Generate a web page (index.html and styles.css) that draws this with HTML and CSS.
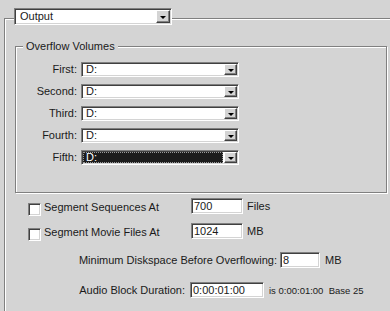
FILE: index.html
```html
<!DOCTYPE html>
<html lang="en">
<head>
  <meta charset="UTF-8">
  <title>Output Settings</title>
  <link rel="stylesheet" href="styles.css">
</head>
<body>
  <div class="panel">
    <div class="panel-head">
      <div class="combo combo-lg">
        <span class="combo-value">Output</span>
        <span class="combo-btn"><span class="arrow"></span></span>
      </div>
    </div>

    <div class="group">
      <div class="group-title">Overflow Volumes</div>
      <div class="volumes">
        <div class="vol-row">
          <span class="vol-label">First:</span>
          <div class="combo"><span class="combo-value">D:</span><span class="combo-btn"><span class="arrow"></span></span></div>
        </div>
        <div class="vol-row">
          <span class="vol-label">Second:</span>
          <div class="combo"><span class="combo-value">D:</span><span class="combo-btn"><span class="arrow"></span></span></div>
        </div>
        <div class="vol-row">
          <span class="vol-label">Third:</span>
          <div class="combo"><span class="combo-value">D:</span><span class="combo-btn"><span class="arrow"></span></span></div>
        </div>
        <div class="vol-row">
          <span class="vol-label">Fourth:</span>
          <div class="combo"><span class="combo-value">D:</span><span class="combo-btn"><span class="arrow"></span></span></div>
        </div>
        <div class="vol-row">
          <span class="vol-label">Fifth:</span>
          <div class="combo"><span class="combo-value selected">D:</span><span class="combo-btn"><span class="arrow"></span></span></div>
        </div>
      </div>
    </div>

    <div class="seg-row first">
      <span class="check"></span>
      <span class="seg-label">Segment Sequences At</span>
      <span class="field field-num">700</span>
      <span class="unit">Files</span>
    </div>
    <div class="seg-row">
      <span class="check"></span>
      <span class="seg-label">Segment Movie Files At</span>
      <span class="field field-num">1024</span>
      <span class="unit">MB</span>
    </div>

    <div class="opt-row min-row">
      <span class="opt-label min-label">Minimum Diskspace Before Overflowing:</span>
      <span class="field field-sm">8</span>
      <span class="unit">MB</span>
    </div>
    <div class="opt-row audio-row">
      <span class="opt-label audio-label">Audio Block Duration:</span>
      <span class="field field-time">0:00:01:00</span>
      <span class="hint">is 0:00:01:00&nbsp; Base 25</span>
    </div>
  </div>
</body>
</html>
```

FILE: styles.css
```css
body {
  margin: 0;
  background: #d4d4d4;
  font-family: "Liberation Sans", Arial, sans-serif;
  font-size: 11px;
  line-height: 13px;
  color: #1a1a1a;
  overflow: hidden;
}

.panel {
  box-sizing: border-box;
  margin: 18px 0 0 4px;
  height: 293px;
  border-top: 1px solid #808080;
  border-left: 1px solid #808080;
  box-shadow: inset 1px 1px 0 #fff;
}

.panel-head {
  margin: -11px 0 0 9px;
}

/* combo box */
.combo {
  box-sizing: border-box;
  display: flex;
  align-items: stretch;
  width: 158px;
  height: 15px;
  padding: 1px;
  background: #fff;
  border: 1px solid;
  border-color: #808080 #fff #fff #808080;
  box-shadow: inset 1px 1px 0 #404040, inset -1px -1px 0 #d4d4d4;
}
.combo-lg {
  height: 17px;
}
.combo-value {
  flex: 1;
  padding-left: 3px;
  margin-right: 1px;
  line-height: 11px;
}
.combo-lg .combo-value {
  padding-left: 4px;
  line-height: 13px;
}
.combo-value.selected {
  background: #1c1c1c;
  color: #fff;
  outline: 1px dotted #9a9a9a;
  outline-offset: -1px;
}
.combo-btn {
  box-sizing: border-box;
  width: 13px;
  display: flex;
  align-items: center;
  justify-content: center;
  background: #d4d4d4;
  border: 1px solid;
  border-color: #fff #404040 #404040 #fff;
  box-shadow: inset -1px -1px 0 #808080;
}
.combo-lg .combo-btn {
  width: 14px;
}
.arrow {
  width: 0;
  height: 0;
  border-left: 3px solid transparent;
  border-right: 3px solid transparent;
  border-top: 3px solid #000;
  margin-top: 1px;
}

/* overflow group */
.group {
  box-sizing: border-box;
  margin: 21px 0 0 10px;
  width: 372px;
  height: 147px;
  border: 1px solid #808080;
  box-shadow: inset 1px 1px 0 #fff, 1px 1px 0 #fff;
}
.group-title {
  width: fit-content;
  margin: -7px 0 0 7px;
  padding: 0 3px;
  background: #d4d4d4;
}
.volumes {
  display: flex;
  flex-direction: column;
  gap: 7px;
  margin-top: 9px;
}
.vol-row {
  display: flex;
  align-items: center;
  gap: 4px;
}
.vol-label {
  width: 61px;
  text-align: right;
}

/* text fields */
.field {
  box-sizing: border-box;
  height: 16px;
  padding: 1px 0 0 2px;
  background: #fff;
  border: 1px solid;
  border-color: #808080 #fff #fff #808080;
  box-shadow: inset 1px 1px 0 #404040, inset -1px -1px 0 #d4d4d4;
  line-height: 12px;
}
.field-num {
  width: 52px;
}
.field-sm {
  width: 40px;
}
.field-time {
  width: 74px;
}

/* segment rows */
.seg-row {
  display: flex;
  align-items: flex-start;
  height: 16px;
  margin: 9px 0 0 23px;
}
.seg-row.first {
  margin-top: 5px;
}
.check {
  box-sizing: border-box;
  width: 13px;
  height: 13px;
  margin: 5px 3px 0 0;
  background: #fff;
  border: 1px solid;
  border-color: #808080 #fff #fff #808080;
  box-shadow: inset 1px 1px 0 #404040, inset -1px -1px 0 #d4d4d4;
}
.seg-label {
  width: 147px;
  margin-top: 3px;
}
.unit {
  margin-left: 4px;
  align-self: center;
}

/* option rows */
.opt-row {
  display: flex;
  align-items: center;
  height: 16px;
}
.min-row {
  margin-top: 13px;
}
.audio-row {
  margin-top: 14px;
}
.opt-label {
  text-align: right;
}
.min-label {
  width: 272px;
  margin-right: 3px;
}
.min-row .unit {
  margin-left: 5px;
}
.audio-label {
  width: 180px;
  margin-right: 5px;
}
.hint {
  margin-left: 5px;
  font-size: 9.5px;
}
```
